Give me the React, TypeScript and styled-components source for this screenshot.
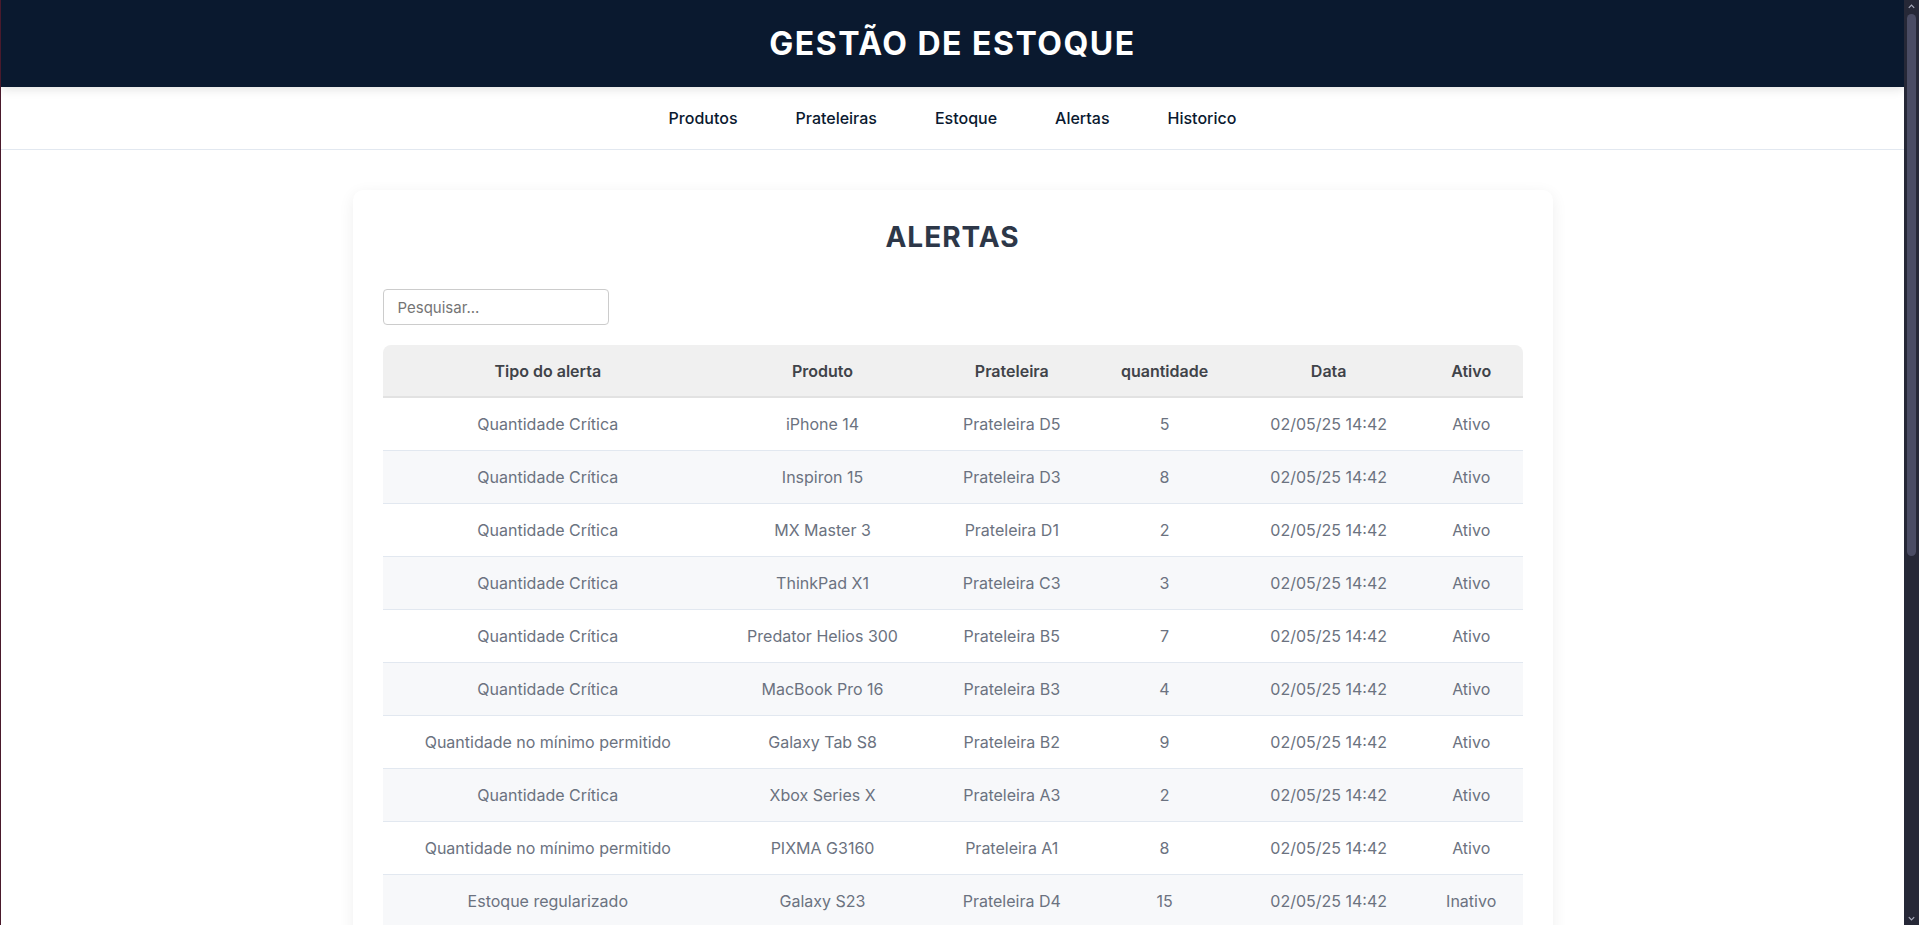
import styled, { createGlobalStyle } from "styled-components";

type Alerta = {
  tipo: string;
  produto: string;
  prateleira: string;
  quantidade: number;
  data: string;
  ativo: boolean;
};

const alertas: Alerta[] = [
  { tipo: "Quantidade Crítica", produto: "iPhone 14", prateleira: "Prateleira D5", quantidade: 5, data: "02/05/25 14:42", ativo: true },
  { tipo: "Quantidade Crítica", produto: "Inspiron 15", prateleira: "Prateleira D3", quantidade: 8, data: "02/05/25 14:42", ativo: true },
  { tipo: "Quantidade Crítica", produto: "MX Master 3", prateleira: "Prateleira D1", quantidade: 2, data: "02/05/25 14:42", ativo: true },
  { tipo: "Quantidade Crítica", produto: "ThinkPad X1", prateleira: "Prateleira C3", quantidade: 3, data: "02/05/25 14:42", ativo: true },
  { tipo: "Quantidade Crítica", produto: "Predator Helios 300", prateleira: "Prateleira B5", quantidade: 7, data: "02/05/25 14:42", ativo: true },
  { tipo: "Quantidade Crítica", produto: "MacBook Pro 16", prateleira: "Prateleira B3", quantidade: 4, data: "02/05/25 14:42", ativo: true },
  { tipo: "Quantidade no mínimo permitido", produto: "Galaxy Tab S8", prateleira: "Prateleira B2", quantidade: 9, data: "02/05/25 14:42", ativo: true },
  { tipo: "Quantidade Crítica", produto: "Xbox Series X", prateleira: "Prateleira A3", quantidade: 2, data: "02/05/25 14:42", ativo: true },
  { tipo: "Quantidade no mínimo permitido", produto: "PIXMA G3160", prateleira: "Prateleira A1", quantidade: 8, data: "02/05/25 14:42", ativo: true },
  { tipo: "Estoque regularizado", produto: "Galaxy S23", prateleira: "Prateleira D4", quantidade: 15, data: "02/05/25 14:42", ativo: false },
  { tipo: "Estoque regularizado", produto: "PlayStation 5", prateleira: "Prateleira A2", quantidade: 12, data: "02/05/25 14:42", ativo: false },
  { tipo: "Quantidade Crítica", produto: "Galaxy Book 3", prateleira: "Prateleira C1", quantidade: 3, data: "02/05/25 14:42", ativo: false },
  { tipo: "Estoque regularizado", produto: "iPad Air", prateleira: "Prateleira C2", quantidade: 20, data: "02/05/25 14:42", ativo: false },
  { tipo: "Quantidade no mínimo permitido", produto: "Echo Dot 5", prateleira: "Prateleira C4", quantidade: 10, data: "02/05/25 14:42", ativo: false },
  { tipo: "Estoque regularizado", produto: "Kindle Paperwhite", prateleira: "Prateleira C5", quantidade: 18, data: "02/05/25 14:42", ativo: false },
  { tipo: "Quantidade Crítica", produto: "AirPods Pro", prateleira: "Prateleira B1", quantidade: 4, data: "02/05/25 14:42", ativo: false },
  { tipo: "Estoque regularizado", produto: "Nintendo Switch", prateleira: "Prateleira B4", quantidade: 16, data: "02/05/25 14:42", ativo: false },
  { tipo: "Quantidade no mínimo permitido", produto: "Moto G84", prateleira: "Prateleira A4", quantidade: 10, data: "02/05/25 14:42", ativo: false },
  { tipo: "Estoque regularizado", produto: "LaserJet Pro M404", prateleira: "Prateleira A5", quantidade: 14, data: "02/05/25 14:42", ativo: false },
  { tipo: "Quantidade Crítica", produto: "Galaxy Watch 6", prateleira: "Prateleira D2", quantidade: 1, data: "02/05/25 14:42", ativo: false },
];

const colunas = [
  { label: "Tipo do alerta", width: "29%" },
  { label: "Produto", width: "19.2%" },
  { label: "Prateleira", width: "14%" },
  { label: "quantidade", width: "12.8%" },
  { label: "Data", width: "16%" },
  { label: "Ativo", width: "9%" },
];

const links = ["Produtos", "Prateleiras", "Estoque", "Alertas", "Historico"];

const GlobalStyle = createGlobalStyle`
  html, body, #root {
    height: 100%;
  }
  body {
    margin: 0;
    background: #ffffff;
    font-family: Inter, "Noto Sans", Arial, sans-serif;
    color: #2d3748;
    overflow: hidden;
  }
  * {
    box-sizing: border-box;
  }
`;

const Frame = styled.div`
  display: flex;
  height: 100vh;
  border-left: 1px solid #4a1a2c;
`;

const Page = styled.div`
  flex: 1;
  min-width: 0;
  overflow-y: auto;
  scrollbar-width: none;
`;

const Rail = styled.div`
  width: 15px;
  flex-shrink: 0;
  background: #262837;
  display: flex;
  flex-direction: column;
  align-items: center;
  padding: 2px 0;
`;

const Arrow = styled.svg`
  width: 9px;
  height: 9px;
  flex-shrink: 0;
`;

const Thumb = styled.div`
  width: 9px;
  height: 542px;
  margin-top: 3px;
  border-radius: 5px;
  background: #4a4c64;
`;

const RailSpacer = styled.div`
  flex: 1;
`;

const Header = styled.header`
  background: #0a192f;
  padding: 26px 0;
  text-align: center;
  box-shadow: 0 2px 10px rgba(0, 0, 0, 0.12);
  position: relative;
  z-index: 1;

  h1 {
    margin: 0;
    color: #ffffff;
    font-size: 32px;
    line-height: 35px;
    font-weight: 700;
    letter-spacing: 1.5px;
  }
`;

const Nav = styled.nav`
  display: flex;
  justify-content: center;
  gap: 58px;
  padding: 21px 0 20px;
  background: #ffffff;
  border-bottom: 1px solid #e2e8f0;

  a {
    color: #0a192f;
    text-decoration: none;
    font-size: 16px;
    line-height: 21px;
    font-weight: 500;
  }
`;

const Main = styled.main`
  padding: 40px 0;
`;

const Card = styled.section`
  max-width: 1200px;
  margin: 0 auto;
  background: #ffffff;
  border-radius: 10px;
  padding: 30px;
  box-shadow: 0 4px 16px rgba(0, 0, 0, 0.07);

  h2 {
    margin: 0 0 34px;
    text-align: center;
    font-size: 28px;
    line-height: 35px;
    font-weight: 700;
    letter-spacing: 1px;
    color: #2d3748;
  }
`;

const Search = styled.input`
  display: block;
  width: 226px;
  height: 36px;
  padding: 0 14px;
  margin-bottom: 20px;
  border: 1px solid #cccccc;
  border-radius: 4px;
  font-family: inherit;
  font-size: 15px;
  color: #333;
  background: #ffffff;

  &::placeholder {
    color: #757575;
  }
`;

const Table = styled.table`
  width: 100%;
  border-collapse: separate;
  border-spacing: 0;
  table-layout: fixed;

  th {
    background: #f0f0f0;
    color: #404349;
    font-weight: 600;
    font-size: 16px;
    line-height: 19px;
    padding: 17px 8px 15px;
    border-bottom: 2px solid #e2e2e2;
  }
  th:first-child {
    border-top-left-radius: 8px;
  }
  th:last-child {
    border-top-right-radius: 8px;
  }
`;

const Row = styled.tr<{ $alt: boolean }>`
  background: ${({ $alt }) => ($alt ? "#f7f8fa" : "#ffffff")};

  td {
    text-align: center;
    color: #6b7280;
    font-size: 16px;
    line-height: 20px;
    padding: 16px 8px;
    border-bottom: 1px solid #e2e8f0;
  }
`;

export default function App() {
  return (
    <>
      <GlobalStyle />
      <Frame>
        <Page>
          <Header>
            <h1>GESTÃO DE ESTOQUE</h1>
          </Header>
          <Nav>
            {links.map((l) => (
              <a key={l} href="#">
                {l}
              </a>
            ))}
          </Nav>
          <Main>
            <Card>
              <h2>ALERTAS</h2>
              <Search placeholder="Pesquisar..." />
              <Table>
                <thead>
                  <tr>
                    {colunas.map((c) => (
                      <th key={c.label} style={{ width: c.width }}>
                        {c.label}
                      </th>
                    ))}
                  </tr>
                </thead>
                <tbody>
                  {alertas.map((a, i) => (
                    <Row key={i} $alt={i % 2 === 1}>
                      <td>{a.tipo}</td>
                      <td>{a.produto}</td>
                      <td>{a.prateleira}</td>
                      <td>{a.quantidade}</td>
                      <td>{a.data}</td>
                      <td>{a.ativo ? "Ativo" : "Inativo"}</td>
                    </Row>
                  ))}
                </tbody>
              </Table>
            </Card>
          </Main>
        </Page>
        <Rail>
          <Arrow viewBox="0 0 10 10">
            <path d="M2 6.5 L5 3.5 L8 6.5" fill="none" stroke="#a5a7b8" strokeWidth="1.4" />
          </Arrow>
          <Thumb />
          <RailSpacer />
          <Arrow viewBox="0 0 10 10">
            <path d="M2 3.5 L5 6.5 L8 3.5" fill="none" stroke="#a5a7b8" strokeWidth="1.4" />
          </Arrow>
        </Rail>
      </Frame>
    </>
  );
}
